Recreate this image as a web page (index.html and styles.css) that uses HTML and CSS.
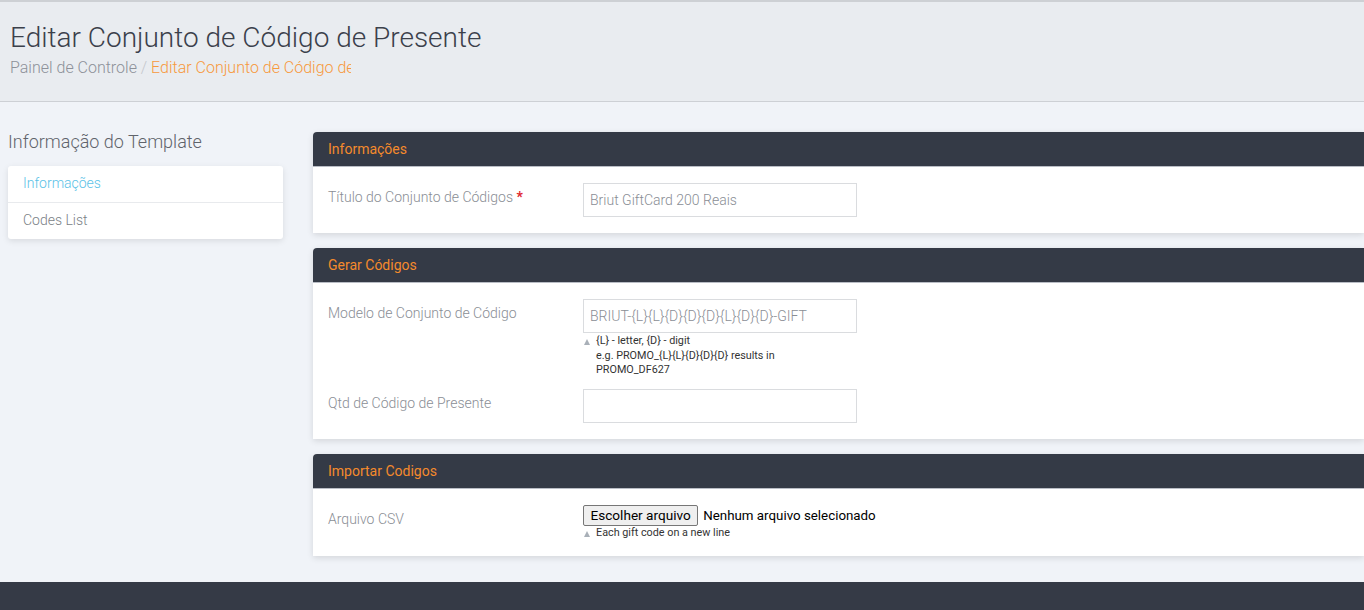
FILE: index.html
```html
<!DOCTYPE html>
<html lang="pt">
<head>
<meta charset="utf-8">
<title>Editar Conjunto de Código de Presente</title>
<link rel="stylesheet" href="styles.css">
</head>
<body>
<header class="page-header">
  <h1 class="page-title">Editar Conjunto de Código de Presente</h1>
  <div class="breadcrumb"><span class="crumb">Painel de Controle</span><span class="sep"> / </span><span class="crumb-active">Editar Conjunto de Código de Presente</span></div>
</header>
<div class="content">
  <aside class="sidebar">
    <h2 class="side-title">Informação do Template</h2>
    <ul class="side-nav">
      <li class="side-item active">Informações</li>
      <li class="side-item">Codes List</li>
    </ul>
  </aside>
  <main class="main">
    <section class="panel">
      <div class="panel-head">Informações</div>
      <div class="panel-body">
        <div class="row">
          <label class="label">Título do Conjunto de Códigos <span class="req">*</span></label>
          <div class="field"><input class="input" type="text" value="Briut GiftCard 200 Reais"></div>
        </div>
      </div>
    </section>
    <section class="panel">
      <div class="panel-head">Gerar Códigos</div>
      <div class="panel-body">
        <div class="row">
          <label class="label">Modelo de Conjunto de Código</label>
          <div class="field">
            <input class="input" type="text" value="BRIUT-{L}{L}{D}{D}{D}{L}{D}{D}-GIFT">
            <div class="help"><span class="tri"></span><div class="help-text">{L} - letter, {D} - digit<br>e.g. PROMO_{L}{L}{D}{D}{D} results in<br>PROMO_DF627</div></div>
          </div>
        </div>
        <div class="row row-2">
          <label class="label">Qtd de Código de Presente</label>
          <div class="field"><input class="input" type="text" value=""></div>
        </div>
      </div>
    </section>
    <section class="panel">
      <div class="panel-head">Importar Codigos</div>
      <div class="panel-body">
        <div class="row">
          <label class="label">Arquivo CSV</label>
          <div class="field">
            <div class="file"><button class="file-btn" type="button">Escolher arquivo</button><span class="file-name">Nenhum arquivo selecionado</span></div>
            <div class="help help-file"><span class="tri"></span><div class="help-text">Each gift code on a new line</div></div>
          </div>
        </div>
      </div>
    </section>
  </main>
</div>
<footer class="footer"></footer>
</body>
</html>
```
FILE: styles.css
```css
* { box-sizing: border-box; }
html, body { margin: 0; padding: 0; }
body {
  font-family: Roboto, "Liberation Sans", Arial, sans-serif;
  font-weight: 300;
  background: #f0f3f8;
  overflow: hidden;
  height: 610px;
}
.page-header {
  background: #e9ecf0;
  border-top: 2px solid #cdd0d4;
  border-bottom: 1px solid #cdd0d5;
  height: 102px;
  padding: 18px 10px 0;
}
.page-title {
  margin: 0;
  font-size: 28px;
  font-weight: 300;
  color: #3b404b;
  line-height: 36px;
}
.breadcrumb {
  margin-top: 2px;
  font-size: 16px;
  line-height: 20px;
  white-space: nowrap;
}
.crumb { color: #8d9199; }
.sep { color: #c4c7cc; }
.crumb-active {
  color: #f7993d;
  display: inline-block;
  width: 200px;
  overflow: hidden;
  vertical-align: bottom;
}
.content {
  display: flex;
  gap: 30px;
  padding: 30px 0 26px 8px;
}
.sidebar { width: 275px; flex: none; }
.side-title {
  margin: -2px 0 12px;
  font-size: 18px;
  font-weight: 300;
  color: #5f636b;
  line-height: 24px;
}
.side-nav {
  list-style: none;
  margin: 0;
  padding: 0;
  background: #fff;
  border-radius: 3px;
  box-shadow: 0 2px 6px rgba(0,0,0,0.1);
}
.side-item {
  height: 36px;
  line-height: 34px;
  padding-left: 15px;
  font-size: 14px;
  color: #7b7f86;
}
.side-item + .side-item { border-top: 1px solid #e8eaed; height: 37px; }
.side-item.active { color: #5bc2e7; }
.main {
  flex: 1;
  display: flex;
  flex-direction: column;
  gap: 15px;
}
.panel {
  background: #fff;
  border-radius: 4px 0 0 0;
  box-shadow: 0 2px 6px rgba(0,0,0,0.12);
}
.panel-head {
  background: #343a46;
  color: #f58a2c;
  height: 35px;
  line-height: 34px;
  padding-left: 15px;
  font-size: 14px;
  font-weight: 400;
  border-radius: 4px 0 0 0;
  border-bottom: 1px solid #b9bdc5;
}
.panel-body { padding: 16px 15px 16px; }
.row { display: flex; }
.row-2 { margin-top: 11px; }
.label {
  width: 255px;
  flex: none;
  padding-top: 4px;
  font-size: 14px;
  line-height: 20px;
  color: #8a8e95;
}
.req { color: #e0262d; font-weight: 700; }
.field { width: 274px; }
.input {
  display: block;
  width: 274px;
  height: 34px;
  border: 1px solid #dadcdf;
  border-radius: 0;
  padding: 0 6px;
  font-family: Roboto, "Liberation Sans", Arial, sans-serif;
  font-weight: 300;
  font-size: 14px;
  color: #8a8e95;
  background: #fff;
  outline: none;
}
.help {
  display: flex;
  margin-top: 1px;
  font-size: 10.8px;
  font-weight: 400;
  line-height: 14.5px;
  color: #333;
}
.tri {
  flex: none;
  width: 0; height: 0;
  margin: 5px 6px 0 1px;
  border-left: 3.5px solid transparent;
  border-right: 3.5px solid transparent;
  border-bottom: 6px solid #a9b0b8;
}
.help-text { width: 200px; }
.help-file { margin-top: 0; }
.help-file .help-text { width: auto; white-space: nowrap; }
.file {
  display: flex;
  align-items: center;
  white-space: nowrap;
  font-size: 13.33px;
  color: #000;
}
.file-btn {
  height: 21px;
  padding: 1px 6.5px;
  margin: 0 5px 0 0;
  background: #efefef;
  border: 1px solid #767676;
  border-radius: 2px;
  font-family: Roboto, "Liberation Sans", Arial, sans-serif;
  font-weight: 400;
  font-size: 13.6px;
  color: #000;
}
.file-name {
  font-family: Roboto, "Liberation Sans", Arial, sans-serif;
  font-weight: 400;
  font-size: 13.33px;
}
.footer {
  background: #353a46;
  height: 40px;
}
```
